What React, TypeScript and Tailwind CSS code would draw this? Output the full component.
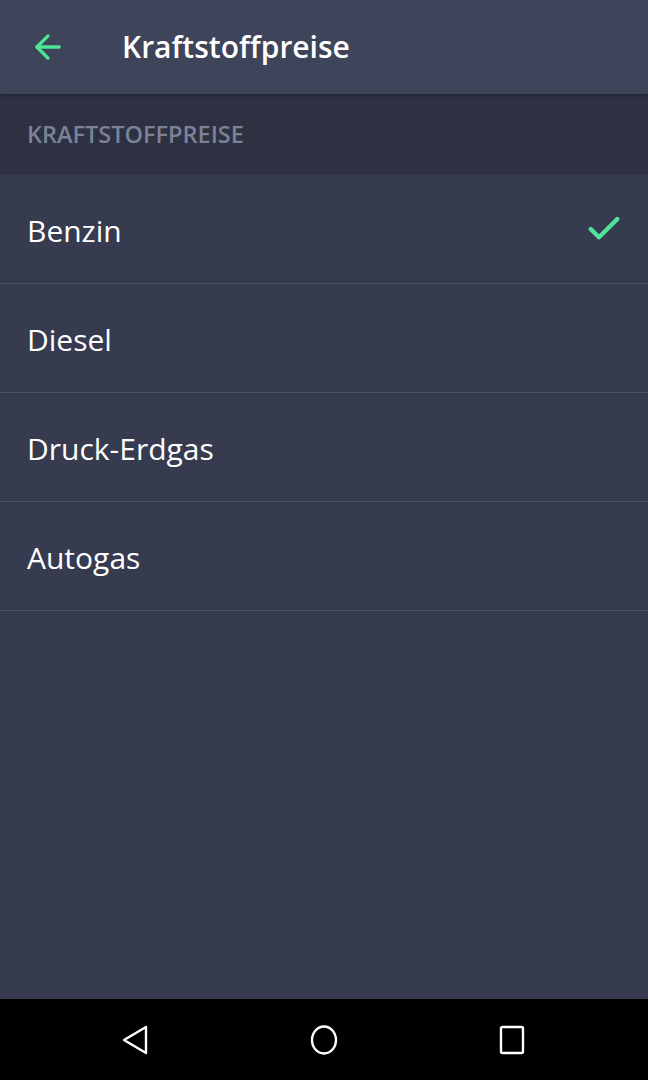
import { ArrowLeft, Check } from 'lucide-react'

const fuels = ['Benzin', 'Diesel', 'Druck-Erdgas', 'Autogas']

export default function App() {
  const selected = 'Benzin'

  return (
    <div
      className="flex h-[1080px] w-[648px] flex-col bg-[#363b4f] text-white"
      style={{ fontFamily: '"Open Sans", "Noto Sans", sans-serif' }}
    >
      {/* Toolbar */}
      <header className="relative z-10 flex h-[94px] shrink-0 items-center bg-[#3e4459] shadow-[0_2px_3px_rgba(0,0,0,0.25)]">
        <button className="ml-[28px] flex h-10 w-10 items-center justify-center text-[#4ee598]">
          <ArrowLeft className="h-[38px] w-[38px]" strokeWidth={2.1} />
        </button>
        <h1 className="ml-[54px] text-[30px] font-semibold leading-none">Kraftstoffpreise</h1>
      </header>

      {/* Section header */}
      <div className="flex h-[81px] shrink-0 items-center bg-[#2d3142] px-[27px]">
        <span className="text-[23.5px] font-semibold uppercase leading-none text-[#7b8296]">Kraftstoffpreise</span>
      </div>

      {/* Fuel list */}
      <ul className="flex-1">
        {fuels.map((f) => (
          <li key={f} className="flex h-[109px] items-center justify-between border-b border-[#4c5165] pl-[27px] pr-[24px]">
            <span className="pt-[4px] text-[30px] leading-none">{f}</span>
            {f === selected && <Check className="h-[40px] w-[40px] text-[#4ee598]" strokeWidth={2.6} />}
          </li>
        ))}
      </ul>

      {/* Android nav bar */}
      <nav className="flex h-[81px] shrink-0 items-center justify-center bg-black">
        <div className="flex w-[189px] justify-center">
          <svg width="30" height="32" viewBox="0 0 30 32" fill="none" stroke="white" strokeWidth="2.4" strokeLinejoin="round">
            <path d="M26 3 L4 16 L26 29 Z" />
          </svg>
        </div>
        <div className="flex w-[189px] justify-center">
          <svg width="32" height="32" viewBox="0 0 32 32" fill="none" stroke="white" strokeWidth="2.4">
            <ellipse cx="16" cy="16" rx="12" ry="13.5" />
          </svg>
        </div>
        <div className="flex w-[189px] justify-center">
          <svg width="30" height="30" viewBox="0 0 30 30" fill="none" stroke="white" strokeWidth="2.4">
            <rect x="3" y="2" width="22" height="26" rx="1.5" />
          </svg>
        </div>
      </nav>
    </div>
  )
}
